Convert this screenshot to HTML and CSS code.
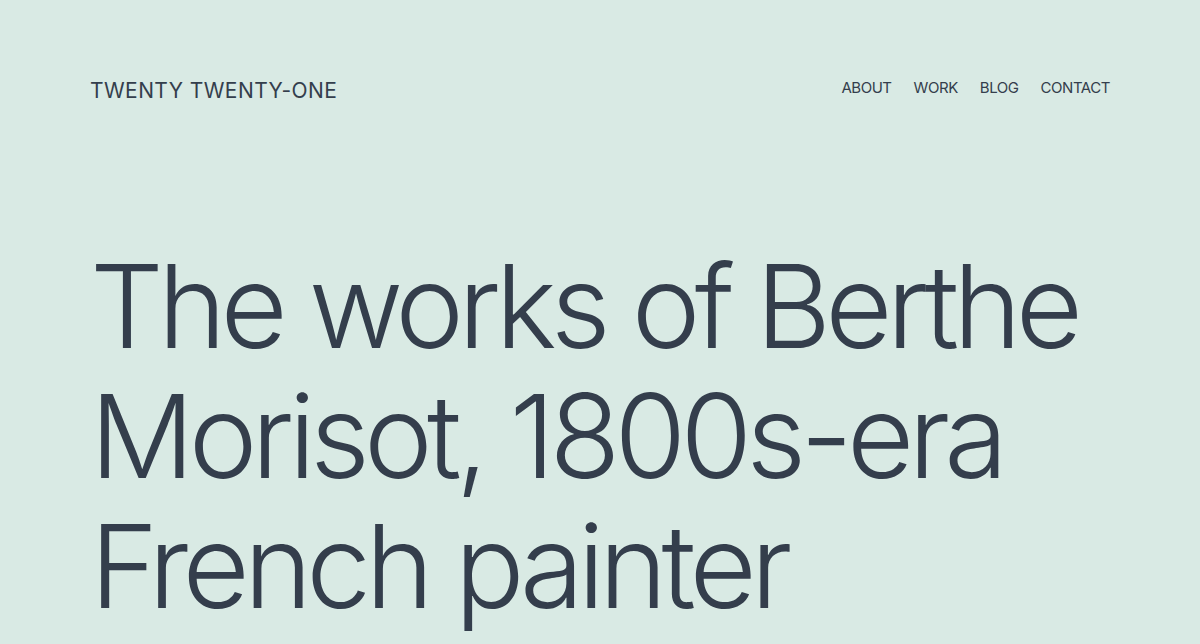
FILE: index.html
```html
<!DOCTYPE html>
<html lang="en">
<head>
    <meta charset="UTF-8">
    <meta name="viewport" content="width=device-width, initial-scale=1.0">
    <title>Twenty Twenty-One</title>
    <link rel="stylesheet" href="styles.css">
</head>
<body>
    <header class="site-header">
        <p class="site-title">TWENTY TWENTY-ONE</p>
        <nav class="site-nav">
            <a href="#">ABOUT</a>
            <a href="#">WORK</a>
            <a href="#">BLOG</a>
            <a href="#">CONTACT</a>
        </nav>
    </header>

    <main class="site-main">
        <h1 class="hero-title">The works of Berthe Morisot, 1800s-era French painter</h1>
    </main>
</body>
</html>
```

FILE: styles.css
```css
*{
    padding: 0;
    margin: 0;
    box-sizing: border-box;
}

body{
    background: #d9eae4;
    color: #343e4c;
    font-family: Inter, "Noto Sans", sans-serif;
}

.site-header{
    display: flex;
    justify-content: space-between;
    align-items: flex-start;
    padding: 78px 90px 0 90px;
}

.site-title{
    font-size: 21px;
    letter-spacing: 0.02em;
    line-height: 26px;
}

.site-nav{
    display: flex;
    gap: 22px;
}

.site-nav a{
    color: #343e4c;
    text-decoration: none;
    font-size: 15px;
    letter-spacing: -0.03em;
    line-height: 20px;
}

.site-main{
    padding: 137px 90px 0 90px;
}

.hero-title{
    font-weight: 350;
    font-size: 116px;
    line-height: 130px;
    letter-spacing: -0.05em;
}
```
